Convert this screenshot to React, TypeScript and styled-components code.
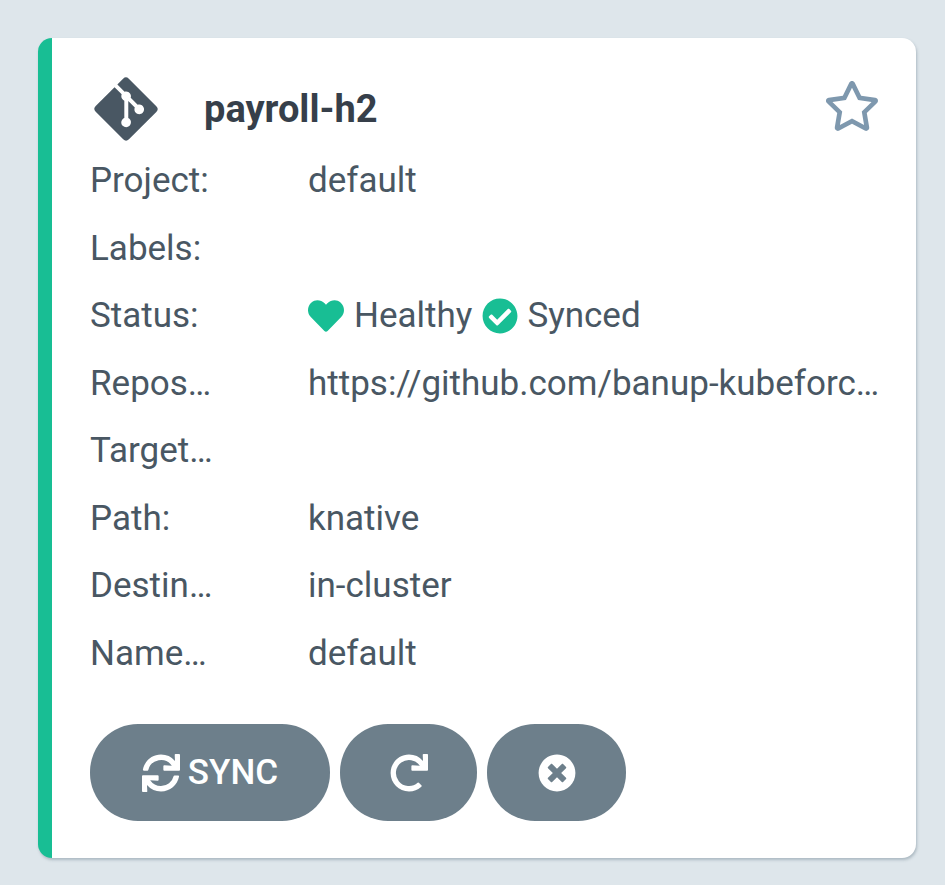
import React from "react";
import styled, { createGlobalStyle } from "styled-components";
import { FaGitAlt, FaRegStar, FaHeart, FaCheckCircle, FaSync, FaRedo, FaTimesCircle } from "react-icons/fa";

const Global = createGlobalStyle`
  html, body { margin: 0; padding: 0; background: #dee6eb; }
  body { font-family: Roboto, "Liberation Sans", sans-serif; }
`;
const Page = styled.div`
  width: 945px;
  height: 885px;
  box-sizing: border-box;
  padding: 38px 29px 27px 38px;
`;
const Card = styled.div`
  box-sizing: border-box;
  width: 878px;
  height: 820px;
  background: #fff;
  border-left: 14px solid #18be94;
  border-radius: 14px;
  box-shadow: 1px 2px 3px rgba(110, 130, 145, 0.45);
  padding: 35px 36px 36px 38px;
  display: flex;
  flex-direction: column;
  color: #495763;
`;
const Header = styled.div`
  display: flex;
  align-items: center;
  height: 72px;
`;
const GitLogo = styled(FaGitAlt)`
  width: 72px;
  height: 72px;
  flex: none;
  color: #495763;
`;
const Title = styled.div`
  font-size: 38px;
  font-weight: 700;
  margin-left: 42px;
  flex: 1;
  color: #363f4a;
`;
const StarIcon = styled(FaRegStar)`
  width: 56px;
  height: 52px;
  color: #7e98ae;
  margin-top: -6px;
`;
const Rows = styled.div`
  display: flex;
  flex-direction: column;
  margin-top: 2px;
`;
const Row = styled.div`
  display: flex;
  align-items: center;
  height: 67.5px;
  font-size: 35px;
  white-space: nowrap;
`;
const Label = styled.div`
  width: 218px;
  flex: none;
`;
const Value = styled.div`
  flex: 1;
  min-width: 0;
  overflow: hidden;
  text-overflow: ellipsis;
  display: flex;
  align-items: center;
`;
const Link = styled.span`
  overflow: hidden;
  text-overflow: ellipsis;
`;
const Heart = styled(FaHeart)`
  width: 36px;
  height: 36px;
  color: #18be94;
  margin-right: 10px;
`;
const Check = styled(FaCheckCircle)`
  width: 36px;
  height: 36px;
  color: #18be94;
  margin: 0 9px 0 10px;
`;
const Actions = styled.div`
  display: flex;
  gap: 10px;
  margin-top: 37px;
`;
const Pill = styled.button<{ $w: number }>`
  width: ${(p) => p.$w}px;
  height: 97px;
  border: 0;
  border-radius: 48px;
  background: #6d7f8b;
  color: #fff;
  font-family: inherit;
  font-size: 35px;
  font-weight: 500;
  display: flex;
  align-items: center;
  justify-content: center;
  gap: 8px;
  padding: 0;
  svg { width: 38px; height: 38px; }
`;

export default function App() {
  return (
    <Page>
      <Global />
      <Card>
        <Header>
          <GitLogo />
          <Title>payroll-h2</Title>
          <StarIcon />
        </Header>
        <Rows>
          <Row><Label>Project:</Label><Value>default</Value></Row>
          <Row><Label>Labels:</Label><Value /></Row>
          <Row>
            <Label>Status:</Label>
            <Value><Heart />Healthy<Check />Synced</Value>
          </Row>
          <Row><Label>Repos…</Label><Value><Link>https://github.com/banup-kubeforce/knative</Link></Value></Row>
          <Row><Label>Target…</Label><Value /></Row>
          <Row><Label>Path:</Label><Value>knative</Value></Row>
          <Row><Label>Destin…</Label><Value>in-cluster</Value></Row>
          <Row><Label>Name…</Label><Value>default</Value></Row>
        </Rows>
        <Actions>
          <Pill $w={240}><FaSync />SYNC</Pill>
          <Pill $w={137}><FaRedo /></Pill>
          <Pill $w={139}><FaTimesCircle /></Pill>
        </Actions>
      </Card>
    </Page>
  );
}
